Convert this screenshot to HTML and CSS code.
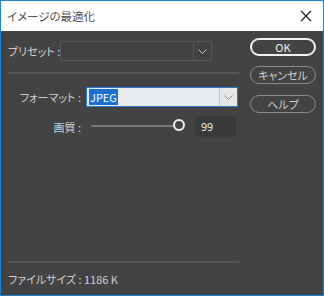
FILE: index.html
```html
<!DOCTYPE html>
<html lang="ja">
<head>
    <meta charset="UTF-8">
    <title>イメージの最適化</title>
    <link rel="stylesheet" href="styles.css">
</head>
<body>
    <div class="ventana">
        <div class="titulo">
            <span>イメージの最適化</span>
            <svg class="cerrar" width="12" height="12" viewBox="0 0 12 12">
                <path d="M1 1 L11 11 M11 1 L1 11" stroke="#1a1a1a" stroke-width="1.2" fill="none"/>
            </svg>
        </div>
        <div class="cuerpo">
            <div class="principal">
                <div class="fila preset">
                    <span class="etiqueta">プリセット :</span>
                    <div class="combo oscuro">
                        <div class="valor"></div>
                        <div class="flecha">
                            <svg width="9" height="5" viewBox="0 0 9 5"><path d="M0.5 0.5 L4.5 4.5 L8.5 0.5" stroke="#c8c8c8" fill="none"/></svg>
                        </div>
                    </div>
                </div>
                <div class="linea"></div>
                <div class="fila formato">
                    <span class="etiqueta der">フォーマット :</span>
                    <div class="combo claro">
                        <div class="valor"><span class="sel">JPEG</span></div>
                        <div class="flecha">
                            <svg width="9" height="5" viewBox="0 0 9 5"><path d="M0.5 0.5 L4.5 4.5 L8.5 0.5" stroke="#8a8a8a" fill="none"/></svg>
                        </div>
                    </div>
                </div>
                <div class="fila calidad">
                    <span class="etiqueta der">画質 :</span>
                    <div class="slider">
                        <div class="pista"></div>
                        <div class="perilla"></div>
                    </div>
                    <div class="numero">99</div>
                </div>
                <div class="relleno"></div>
                <div class="linea"></div>
                <div class="tamano">ファイルサイズ : 1186 K</div>
            </div>
            <div class="botones">
                <button class="boton ok">OK</button>
                <button class="boton">キャンセル</button>
                <button class="boton ayuda">ヘルプ</button>
            </div>
        </div>
    </div>
</body>
</html>
```

FILE: styles.css
```css
body {
    margin: 0;
    font-family: "Noto Sans CJK JP", "Noto Sans", sans-serif;
    font-size: 11px;
    font-feature-settings: "palt";
}

.ventana {
    width: 324px;
    height: 296px;
    box-sizing: border-box;
    border: 1px solid #1883d7;
    display: flex;
    flex-direction: column;
    background-color: #434343;
}

.titulo {
    height: 30px;
    background-color: #ffffff;
    display: flex;
    align-items: center;
    justify-content: space-between;
    padding: 0 10px 0 6px;
    color: #505050;
    font-size: 11.5px;
}

.cerrar {
    margin-right: 1px;
}

.cuerpo {
    flex: 1;
    display: flex;
    color: #d0d0d0;
}

.principal {
    width: 231px;
    padding: 10px 0 0 7px;
    display: flex;
    flex-direction: column;
}

.fila {
    display: flex;
    align-items: center;
}

.etiqueta {
    white-space: nowrap;
}

.preset .etiqueta {
    width: 52px;
}

.der {
    width: 73px;
    text-align: right;
    padding-right: 5px;
}

.combo {
    display: flex;
    height: 20px;
    box-sizing: border-box;
}

.oscuro {
    width: 152px;
    border: 1px solid #575757;
    background-color: #424242;
}

.oscuro .flecha {
    border-left: 1px solid #575757;
}

.valor {
    flex: 1;
    display: flex;
    align-items: center;
    padding-left: 2px;
}

.flecha {
    width: 17px;
    display: flex;
    align-items: center;
    justify-content: center;
}

.linea {
    height: 2px;
    background-color: #555555;
    margin-top: 11px;
}

.formato {
    margin-top: 13px;
}

.claro {
    width: 152px;
    border: 1px solid #2a7ad2;
    background-color: #e9ecef;
    color: #222;
}

.claro .flecha {
    background-color: #e4e6e8;
    border-left: 1px solid #c8c8c8;
}

.sel {
    background-color: #1a70cf;
    color: #ffffff;
    padding: 0 1px;
    line-height: 16px;
}

.calidad {
    margin-top: 9px;
    height: 21px;
}

.slider {
    position: relative;
    width: 100px;
    height: 21px;
}

.pista {
    position: absolute;
    left: 5px;
    right: 10px;
    top: 9px;
    height: 2px;
    background-color: #777777;
}

.perilla {
    position: absolute;
    right: 1px;
    top: 3px;
    width: 8px;
    height: 8px;
    border: 2px solid #f2f2f2;
    border-radius: 50%;
    background-color: #434343;
}

.numero {
    margin-left: 9px;
    width: 41px;
    height: 21px;
    box-sizing: border-box;
    border: 1px solid #3c3c3c;
    background-color: #3a3a3a;
    padding-left: 5px;
    line-height: 19px;
    color: #e8e8e8;
}

.relleno {
    flex: 1;
}

.tamano {
    height: 22px;
    margin-top: 6px;
    line-height: 20px;
    margin-bottom: 4px;
}

.botones {
    margin-left: 11px;
    padding-top: 7px;
    display: flex;
    flex-direction: column;
}

.boton {
    width: 66px;
    height: 18px;
    box-sizing: border-box;
    border: 1px solid #8a8a8a;
    border-radius: 9px;
    background-color: #434343;
    color: #d0d0d0;
    font-family: "Noto Sans CJK JP", "Noto Sans", sans-serif;
    font-size: 11px;
    font-feature-settings: "palt";
    padding: 0;
    line-height: 14px;
    margin-bottom: 10px;
}

.ok {
    border: 2px solid #f0f0f0;
    color: #f0f0f0;
}

.ayuda {
    margin-top: 1px;
}
```
